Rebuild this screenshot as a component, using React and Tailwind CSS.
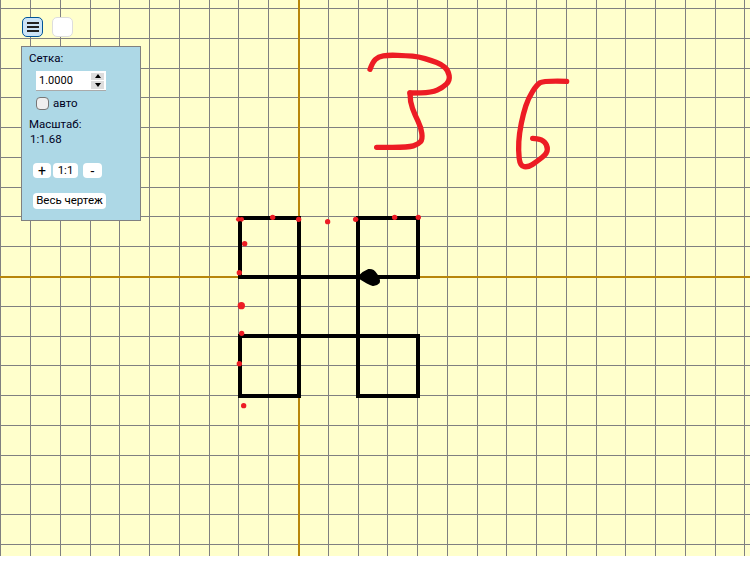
import React from 'react';

const STEP = 29.76;
const ORIGIN_X = 298.5;
const ORIGIN_Y = 276.5;
const WIDTH = 750;
const HEIGHT = 556;

const range = [];
for (let k = -11; k <= 16; k++) range.push(k);

const gridX = range.map((k) => Math.floor(ORIGIN_X + k * STEP) + 0.5).filter((x) => x > 0 && x < WIDTH);
const gridY = range.map((k) => Math.floor(ORIGIN_Y + k * STEP) + 0.5).filter((y) => y > 0 && y < HEIGHT);

// coordinates below are read off 3x crops, so they sit in a scaled group
const DOTS = [
    [40, 43, 7], [50, 43, 7], [143, 37, 8], [221, 43, 8], [308, 50, 8], [392, 43, 8], [509, 37, 8], [580, 37, 8],
    [59, 116, 8], [43, 203, 8], [49, 302, 11], [50, 385, 8], [43, 476, 8], [56, 602, 8],
];

const BLACK_LINES = [
    'M45 38H221', 'M45 38V215', 'M45 215H579', 'M221 38V572', 'M45 393H579', 'M45 393V572H221',
    'M399 38V572', 'M399 38H579V215', 'M579 393V572H399',
];

const THREE_TOP = [[30, 88], [38, 66], [55, 50], [85, 45], [140, 47], [175, 50], [215, 62], [245, 73], [265, 92], [270, 122], [248, 143], [215, 158], [150, 159]];
const THREE_BOTTOM = [[150, 159], [150, 185], [165, 225], [183, 262], [188, 298], [175, 313], [145, 322], [50, 322]];
const SIX = [[620, 124], [550, 122], [530, 135], [505, 175], [490, 220], [478, 280], [475, 330], [480, 378], [505, 382], [530, 365], [562, 340], [562, 315], [545, 298], [518, 295]];

// quadratic through midpoints, so the hand strokes don't look like polylines
function smooth(points) {
    let d = `M${points[0][0]} ${points[0][1]}`;
    for (let i = 1; i < points.length - 1; i++) {
        const mx = (points[i][0] + points[i + 1][0]) / 2;
        const my = (points[i][1] + points[i + 1][1]) / 2;
        d += `Q${points[i][0]} ${points[i][1]} ${mx} ${my}`;
    }
    const last = points[points.length - 1];
    return d + `L${last[0]} ${last[1]}`;
}

function Drawing() {
    return (
        <svg width={WIDTH} height={HEIGHT} className="block">
            <rect width={WIDTH} height={HEIGHT} fill="#ffffcc" />
            <g stroke="#808080" strokeWidth="1" shapeRendering="crispEdges">
                {gridX.map((x) => <line key={x} x1={x} x2={x} y1="0" y2={HEIGHT} />)}
                {gridY.map((y) => <line key={y} x1="0" x2={WIDTH} y1={y} y2={y} />)}
            </g>
            <g stroke="#b8860b" strokeWidth="2" shapeRendering="crispEdges">
                <line x1="299" x2="299" y1="0" y2={HEIGHT} />
                <line x1="0" x2={WIDTH} y1="277" y2="277" />
            </g>
            <g transform="translate(225 205) scale(0.3333)">
                <g stroke="#000" strokeWidth="12" fill="none" strokeLinecap="square" shapeRendering="crispEdges">
                    {BLACK_LINES.map((d) => <path key={d} d={d} />)}
                </g>
                <path d="M403 210Q415 198 430 192Q447 190 455 205Q468 220 464 234Q455 244 443 243Q428 238 403 222Z" fill="#000" />
                {DOTS.map(([x, y, r]) => <circle key={x + '-' + y} cx={x} cy={y} r={r} fill="#ed1c24" />)}
            </g>
            <g transform="translate(360 40) scale(0.3333)" stroke="#ed1c24" strokeWidth="16" fill="none" strokeLinecap="round" strokeLinejoin="round">
                <path d={smooth(THREE_TOP)} />
                <path d={smooth(THREE_BOTTOM)} />
                <path d={smooth(SIX)} />
            </g>
        </svg>
    );
}

function SmallButton({ children, className }) {
    return (
        <button className={'bg-white rounded-[4px] leading-none text-black flex items-center justify-center ' + className}>
            {children}
        </button>
    );
}

function Panel() {
    return (
        <div className="absolute left-[21px] top-[46px] w-[120px] h-[175px] bg-[#add8e6] border border-[#808080] text-[11.5px] leading-[15px] text-[#000022]">
            <div className="pl-[7px] pt-[4px]">Сетка:</div>
            <div className="ml-[14px] mt-[5px] w-[70px] h-[20px] bg-white border-b border-[#aaaaaa] flex items-center justify-between pl-[3px] pr-[2px]">
                <span className="text-black text-[11px]">1.0000</span>
                <div className="w-[13px] h-[16px] flex flex-col gap-px">
                    <div className="flex-1 bg-[#dddddd] flex items-center justify-center">
                        <div className="w-0 h-0 border-x-[3px] border-x-transparent border-b-[4px] border-b-black" />
                    </div>
                    <div className="flex-1 bg-[#dddddd] flex items-center justify-center">
                        <div className="w-0 h-0 border-x-[3px] border-x-transparent border-t-[4px] border-t-black" />
                    </div>
                </div>
            </div>
            <div className="ml-[14px] mt-[5px] flex items-center gap-[4px]">
                <div className="w-[13px] h-[13px] bg-[#efefef] border border-[#767676] rounded-[4px]" />
                <span>авто</span>
            </div>
            <div className="pl-[7px] mt-[6px]">Масштаб:</div>
            <div className="pl-[8px]">1:1.68</div>
            <div className="ml-[11px] mt-[16px] flex gap-[2px]">
                <SmallButton className="w-[18px] h-[15px] text-[14px]">+</SmallButton>
                <SmallButton className="w-[25px] h-[15px] text-[11.5px]">1:1</SmallButton>
                <SmallButton className="w-[19px] h-[15px] ml-[3px] text-[14px]">-</SmallButton>
            </div>
            <SmallButton className="ml-[11px] mt-[15px] w-[73px] h-[16px] text-[11.5px]">Весь чертеж</SmallButton>
        </div>
    );
}

export default function App() {
    return (
        <div className="relative w-[750px] h-[577px] bg-white overflow-hidden font-['Roboto',sans-serif]">
            <Drawing />
            <button className="absolute left-[22px] top-[17px] w-[21px] h-[20px] rounded-[5px] bg-[#cce4f7] border border-[#005499] flex flex-col items-center justify-center gap-[2px]">
                <span className="block w-[12px] h-[2px] bg-[#222222]" />
                <span className="block w-[12px] h-[2px] bg-[#222222]" />
                <span className="block w-[12px] h-[2px] bg-[#222222]" />
            </button>
            <button className="absolute left-[52px] top-[17px] w-[21px] h-[20px] rounded-[5px] bg-white border border-[#dddddd]" />
            <Panel />
        </div>
    );
}
